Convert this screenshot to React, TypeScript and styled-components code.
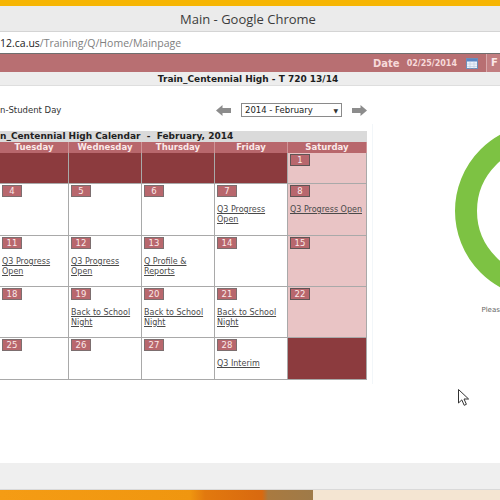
import React from 'react';
import styled, { createGlobalStyle } from 'styled-components';

const GlobalStyle = createGlobalStyle`
  html, body {
    margin: 0;
    padding: 0;
    background: #ffffff;
  }
  body {
    width: 500px;
    height: 500px;
    overflow: hidden;
  }
`;

const Screen = styled.div`
  position: relative;
  width: 500px;
  height: 500px;
  overflow: hidden;
  display: flex;
  flex-direction: column;
  background: #ffffff;
`;

const TopStrip = styled.div`
  flex: none;
  height: 6px;
  background: #f6b503;
`;

const TitleBar = styled.div`
  flex: none;
  box-sizing: border-box;
  height: 26px;
  display: flex;
  align-items: center;
  justify-content: center;
  padding-right: 4px;
  background: #ebebeb;
  border-bottom: 1px solid #d4d4d4;
  font-family: 'Open Sans', sans-serif;
  font-size: 13px;
  color: #3c3c3c;
`;

const AddressBar = styled.div`
  flex: none;
  box-sizing: border-box;
  height: 22px;
  display: flex;
  align-items: center;
  background: #ffffff;
  border-bottom: 1px solid #6e6e6e;
  font-family: 'Open Sans', sans-serif;
  font-size: 10.5px;
  color: #808080;
  white-space: nowrap;
`;

const Host = styled.span`
  color: #222222;
`;

const Page = styled.div`
  flex: 1;
  display: flex;
  flex-direction: column;
  min-height: 0;
  font-family: 'DejaVu Sans', Verdana, sans-serif;
`;

const HeaderBar = styled.div`
  flex: none;
  height: 18px;
  display: flex;
  align-items: center;
  justify-content: flex-end;
  background: #b86f72;
  color: #f7dada;
  font-weight: bold;
`;

const DateLabel = styled.span`
  font-size: 10px;
  margin-right: 7px;
`;

const DateValue = styled.span`
  font-size: 8px;
  margin-right: 9px;
`;

const CalIcon = styled.svg`
  flex: none;
  margin-right: 8px;
`;

const FButton = styled.div`
  box-sizing: border-box;
  width: 14px;
  height: 18px;
  padding-left: 4px;
  border-left: 1px solid #d9a8aa;
  background: #c27e81;
  font-size: 10px;
  line-height: 18px;
  color: #fbe8e8;
`;

const SchoolBar = styled.div`
  flex: none;
  box-sizing: border-box;
  height: 14px;
  display: flex;
  align-items: center;
  justify-content: center;
  padding-right: 4px;
  background: #ededed;
  border-bottom: 1px solid #dedede;
  font-size: 9px;
  font-weight: bold;
  color: #1e1e1e;
`;

const Content = styled.div`
  flex: 1;
  display: flex;
  min-height: 0;
`;

const LeftColumn = styled.div`
  flex: none;
  width: 367px;
  padding-top: 17px;
`;

const Toolbar = styled.div`
  height: 14px;
  display: flex;
  align-items: center;
  justify-content: space-between;
`;

const NoteText = styled.span`
  font-size: 8.5px;
  color: #333333;
`;

const MonthNav = styled.div`
  display: flex;
  align-items: center;
  gap: 10px;
`;

const FakeSelect = styled.div`
  box-sizing: border-box;
  width: 101px;
  height: 14px;
  display: flex;
  align-items: center;
  justify-content: space-between;
  padding: 0 3px;
  border: 1px solid #8a8a8a;
  background: #ffffff;
  font-size: 8.5px;
  color: #222222;
`;

const Caret = styled.span`
  font-size: 6px;
  color: #333;
`;

const Calendar = styled.div`
  margin-top: 14px;
  width: 367px;
`;

const CalTitle = styled.div`
  height: 11px;
  background: #dadada;
  font-size: 9px;
  font-weight: bold;
  line-height: 11px;
  color: #222222;
  white-space: pre;
`;

const cols = '69px 73px 73px 73px 79px';

const DayHeaderRow = styled.div`
  display: grid;
  grid-template-columns: ${cols};
  height: 11px;
  background: #b8676c;
`;

const DayName = styled.div`
  box-sizing: border-box;
  border-right: 1px solid #cf9497;
  text-align: center;
  font-size: 8.5px;
  font-weight: bold;
  line-height: 11px;
  color: #fbe9e9;
`;

const WeekRow = styled.div<{ $height: number }>`
  display: grid;
  grid-template-columns: ${cols};
  height: ${(p) => p.$height}px;
`;

type Kind = 'other' | 'weekend' | 'day';

const Cell = styled.div<{ $kind: Kind }>`
  box-sizing: border-box;
  padding: 1px 0 0 1px;
  overflow: hidden;
  border-right: 1px solid #a9a9a9;
  border-bottom: 1px solid #a9a9a9;
  background: ${(p) =>
    p.$kind === 'other' ? '#8c3b3e' : p.$kind === 'weekend' ? '#e9c4c5' : '#ffffff'};
`;

const Badge = styled.div<{ $dark?: boolean }>`
  box-sizing: border-box;
  width: 20px;
  height: 12px;
  margin-left: 1px;
  border: 1px solid ${(p) => (p.$dark ? '#5e5555' : '#7c6e6f')};
  background: #b8676d;
  text-align: center;
  font-size: 8.5px;
  line-height: 10px;
  color: #fbeaea;
`;

const EventLink = styled.a`
  display: block;
  margin-top: 8px;
  padding-left: 1px;
  font-size: 8px;
  line-height: 10px;
  color: #4a4a4a;
  text-decoration: underline;
`;

const RightPanel = styled.div`
  flex: 1;
  margin-left: 5px;
  padding-top: 34px;
`;

const PanelEdge = styled.div`
  border-left: 1px solid #f2f6f9;
  height: 260px;
`;

const Loader = styled.div`
  width: 174px;
  margin: 4px 0 0 82px;
  display: flex;
  flex-direction: column;
  align-items: center;
`;

const Caption = styled.div`
  margin-top: 8px;
  font-size: 7px;
  color: #666666;
  white-space: nowrap;
`;

const StatusArea = styled.div`
  flex: none;
  height: 27px;
  box-sizing: border-box;
  background: #efefef;
  border-bottom: 1px solid #d9d9d9;
`;

const Taskbar = styled.div`
  flex: none;
  height: 10px;
  display: flex;
`;

const TaskbarApps = styled.div`
  width: 313px;
  background: linear-gradient(
    to right,
    #f59c14 0px,
    #f0960f 190px,
    #e2790e 205px,
    #d9690f 262px,
    #a97a40 268px,
    #9f7a48 312px
  );
`;

const TaskbarRest = styled.div`
  flex: 1;
  background: #f4e5d2;
`;

const Cursor = styled.svg`
  position: absolute;
  left: 458px;
  top: 389px;
`;

type Day = { date?: number; kind: Kind; event?: string };

const weeks: { height: number; days: Day[] }[] = [
  {
    height: 31,
    days: [
      { kind: 'other' },
      { kind: 'other' },
      { kind: 'other' },
      { kind: 'other' },
      { kind: 'weekend', date: 1 },
    ],
  },
  {
    height: 52,
    days: [
      { kind: 'day', date: 4 },
      { kind: 'day', date: 5 },
      { kind: 'day', date: 6 },
      { kind: 'day', date: 7, event: 'Q3 Progress Open' },
      { kind: 'weekend', date: 8, event: 'Q3 Progress Open' },
    ],
  },
  {
    height: 51,
    days: [
      { kind: 'day', date: 11, event: 'Q3 Progress Open' },
      { kind: 'day', date: 12, event: 'Q3 Progress Open' },
      { kind: 'day', date: 13, event: 'Q Profile & Reports' },
      { kind: 'day', date: 14 },
      { kind: 'weekend', date: 15 },
    ],
  },
  {
    height: 51,
    days: [
      { kind: 'day', date: 18 },
      { kind: 'day', date: 19, event: 'Back to School Night' },
      { kind: 'day', date: 20, event: 'Back to School Night' },
      { kind: 'day', date: 21, event: 'Back to School Night' },
      { kind: 'weekend', date: 22 },
    ],
  },
  {
    height: 42,
    days: [
      { kind: 'day', date: 25 },
      { kind: 'day', date: 26 },
      { kind: 'day', date: 27 },
      { kind: 'day', date: 28, event: 'Q3 Interim' },
      { kind: 'other' },
    ],
  },
];

const dayNames = ['Tuesday', 'Wednesday', 'Thursday', 'Friday', 'Saturday'];

const NavArrow = ({ dir }: { dir: 'left' | 'right' }) => (
  <svg width="15" height="11" viewBox="0 0 15 11">
    <polygon
      points="0,5.5 6.5,0 6.5,3 15,3 15,8 6.5,8 6.5,11"
      fill="#8c8c8c"
      transform={dir === 'right' ? 'translate(15 0) scale(-1 1)' : undefined}
    />
  </svg>
);

export default function App() {
  return (
    <Screen>
      <GlobalStyle />
      <TopStrip />
      <TitleBar>Main - Google Chrome</TitleBar>
      <AddressBar>
        <Host>12.ca.us</Host>/Training/Q/Home/Mainpage
      </AddressBar>
      <Page>
        <HeaderBar>
          <DateLabel>Date</DateLabel>
          <DateValue>02/25/2014</DateValue>
          <CalIcon width="12" height="11" viewBox="0 0 12 11">
            <rect x="0.5" y="0.5" width="11" height="10" fill="#eef3fa" stroke="#6d8fb8" />
            <rect x="1" y="1" width="10" height="2.5" fill="#5b86c4" />
            <path d="M1 6 H11 M1 8.5 H11 M4 3.5 V10.5 M8 3.5 V10.5" stroke="#b9c9dd" strokeWidth="0.6" />
          </CalIcon>
          <FButton>F</FButton>
        </HeaderBar>
        <SchoolBar>Train_Centennial High - T 720 13/14</SchoolBar>
        <Content>
          <LeftColumn>
            <Toolbar>
              <NoteText>n-Student Day</NoteText>
              <MonthNav>
                <NavArrow dir="left" />
                <FakeSelect>
                  <span>2014 - February</span>
                  <Caret>▼</Caret>
                </FakeSelect>
                <NavArrow dir="right" />
              </MonthNav>
            </Toolbar>
            <Calendar>
              <CalTitle>{'n_Centennial High Calendar  -  February, 2014'}</CalTitle>
              <DayHeaderRow>
                {dayNames.map((d) => (
                  <DayName key={d}>{d}</DayName>
                ))}
              </DayHeaderRow>
              {weeks.map((w, wi) => (
                <WeekRow key={wi} $height={w.height}>
                  {w.days.map((d, di) => (
                    <Cell key={di} $kind={d.kind}>
                      {d.date !== undefined && <Badge $dark={d.kind === 'weekend'}>{d.date}</Badge>}
                      {d.event && <EventLink>{d.event}</EventLink>}
                    </Cell>
                  ))}
                </WeekRow>
              ))}
            </Calendar>
          </LeftColumn>
          <RightPanel>
            <PanelEdge>
              <Loader>
                <svg width="174" height="174" viewBox="0 0 174 174">
                  <circle cx="87" cy="87" r="76" fill="none" stroke="#7dc243" strokeWidth="22" />
                </svg>
                <Caption>Please wait while the page loads...</Caption>
              </Loader>
            </PanelEdge>
          </RightPanel>
        </Content>
      </Page>
      <StatusArea />
      <Taskbar>
        <TaskbarApps />
        <TaskbarRest />
      </Taskbar>
      <Cursor width="12" height="18" viewBox="0 0 12 18">
        <path
          d="M0.5 0.5 L0.5 14 L3.8 10.9 L6.2 16.3 L8.4 15.3 L6 10 L10.6 10 Z"
          fill="#ffffff"
          stroke="#333333"
          strokeWidth="1"
          strokeLinejoin="round"
        />
      </Cursor>
    </Screen>
  );
}
